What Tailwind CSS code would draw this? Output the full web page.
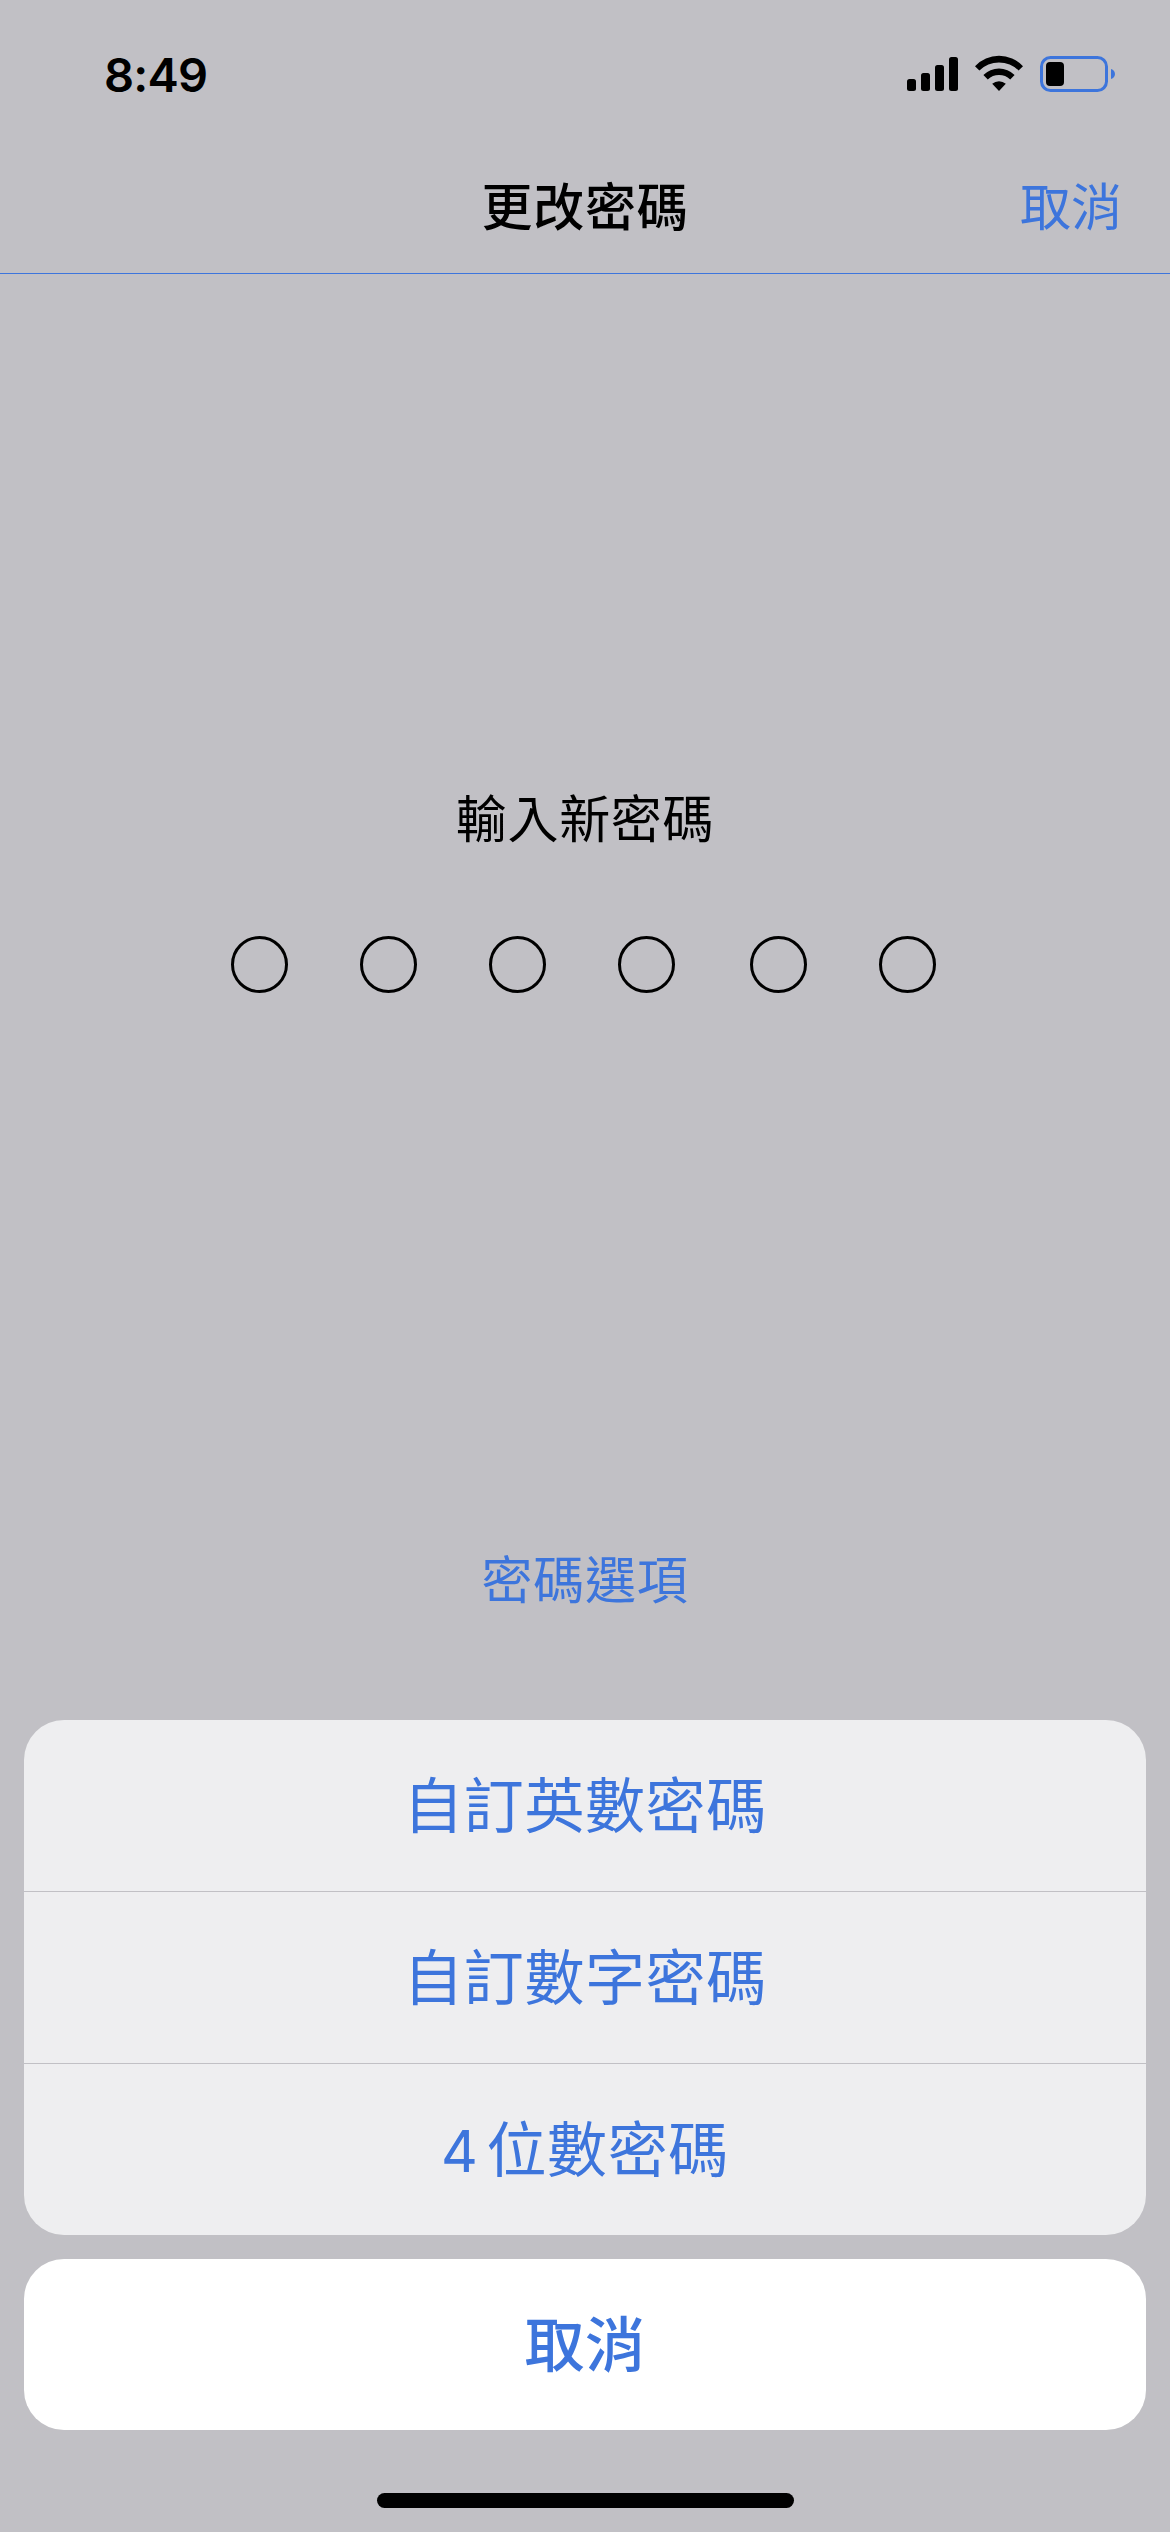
<!DOCTYPE html>
<html lang="zh-Hant">
<head>
<meta charset="utf-8">
<title>更改密碼</title>
<script src="https://cdn.jsdelivr.net/npm/@tailwindcss/browser@4"></script>
</head>
<body class="w-[1170px] h-[2532px] overflow-hidden bg-[#c1c0c5] font-['Noto_Sans_CJK_TC',sans-serif] text-black">
<div class="flex h-full flex-col">
  <div class="flex h-[132px] items-start justify-between pl-[104px] pr-[55px]">
    <div class="mt-[45px] font-['Inter',sans-serif] text-[47px] leading-[60px] font-semibold tracking-[-0.8px]">8:49</div>
    <svg class="mt-[50px]" width="210" height="46" viewBox="905 50 210 46">
      <rect x="907" y="79" width="9" height="12" rx="2.5"/>
      <rect x="921" y="73" width="9" height="18" rx="2.5"/>
      <rect x="935" y="65" width="9" height="26" rx="2.5"/>
      <rect x="949" y="57" width="9" height="34" rx="2.5"/>
      <path d="M975 66.2A33 33 0 0 1 1023 66.2L1018.600 70.600A27.500 27.500 0 0 0 979.400 70.600Z"/>
      <path d="M983.400 75A22 22 0 0 1 1014.600 75L1010.200 79.400A16.500 16.500 0 0 0 987.800 79.400Z"/>
      <path d="M992.200 83.800A10.500 10.500 0 0 1 1005.800 83.800L999 91Z"/>
      <rect x="1041.5" y="57.5" width="65" height="33" rx="9" fill="none" stroke="#3d75dc" stroke-width="3"/>
      <rect x="1046" y="62" width="18" height="24" rx="4"/>
      <path d="M1111 69C1116.300 70.500 1116.300 77.500 1111 79Z" fill="#3d75dc"/>
    </svg>
  </div>
  <header class="grid h-[142px] grid-cols-3 border-b border-[#3d75dc] pr-[48px] pl-[48px] text-[51px] leading-[76px] tracking-[0.7px]">
    <h1 class="col-start-2 mt-[34px] text-center font-medium">更改密碼</h1>
    <button class="mt-[34px] self-start text-right tracking-[0px] text-[#3d75dc]">取消</button>
  </header>
  <main class="flex h-[1446px] flex-col items-center text-[51px] leading-[76px] tracking-[0.7px]">
    <p class="mt-[504px]">輸入新密碼</p>
    <div class="mt-[82px] ml-[-3px] flex gap-[72px]">
      <i class="size-[57px] rounded-full border-3"></i>
      <i class="size-[57px] rounded-full border-3"></i>
      <i class="size-[57px] rounded-full border-3"></i>
      <i class="mr-[3px] size-[57px] rounded-full border-3"></i>
      <i class="size-[57px] rounded-full border-3"></i>
      <i class="size-[57px] rounded-full border-3"></i>
    </div>
    <button class="mt-[546px] text-[#3d75dc]">密碼選項</button>
  </main>
  <div class="mx-6 flex flex-col overflow-hidden rounded-[40px] bg-[#eeeef0] text-[60px] leading-[171px] tracking-[0.6px] text-[#3d75dc]">
    <button class="h-[171px] pb-[8px] leading-[163px]">自訂英數密碼</button>
    <button class="h-[172px] border-t border-[#c1c0c5] pb-[8px] leading-[163px]">自訂數字密碼</button>
    <button class="h-[172px] border-t border-[#c1c0c5] pb-[8px] leading-[163px]"><span class="mr-[8px] font-['Inter',sans-serif] text-[57px]">4</span>位數密碼</button>
  </div>
  <button class="mx-6 mt-6 h-[171px] rounded-[40px] bg-white pb-[8px] text-[60px] leading-[163px] font-medium tracking-[0.6px] text-[#3d75dc]">取消</button>
  <div class="mt-[63px] ml-[377px] h-[15px] w-[417px] rounded-full bg-black"></div>
</div>
</body>
</html>
